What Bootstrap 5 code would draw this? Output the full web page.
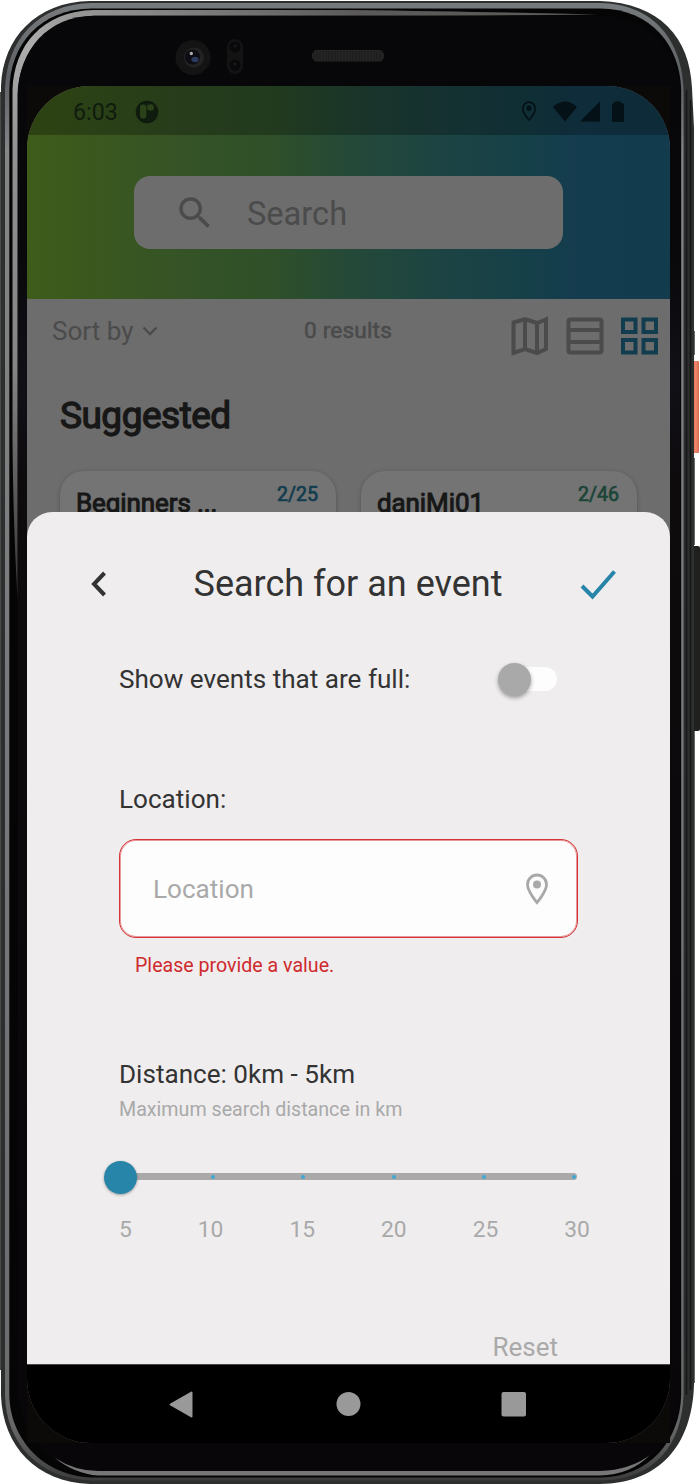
<!DOCTYPE html>
<html lang="en">
<head>
<meta charset="utf-8">
<meta name="viewport" content="width=device-width, initial-scale=1">
<title>Search for an event</title>
<link rel="stylesheet" href="https://cdn.jsdelivr.net/npm/bootstrap@5.3.0/dist/css/bootstrap.min.css">
<style>
  body { font-family: Roboto, "Liberation Sans", sans-serif; background: #fff; overflow: hidden; line-height: 1; }
  .phone { width: 700px; height: 1484px; padding: 86px 30px 41px 27px; }
  .phone-frame { z-index: 0; }
  .screen { width: 643px; height: 1357px; border-radius: 63px 63px 64px 64px; background: #6d6d6d; z-index: 1; }
  .top-gradient { background: linear-gradient(90deg, #3e5c1a 0, #3c5a1c 6%, #355326 24%, #2f5029 38%, #254938 50%, #1c4344 66%, #164048 77%, #143c4f 86%, #133b4e 100%); }
  .status { height: 49px; background: rgba(0,0,0,.265); color: #0f1c0d; padding: 3px 46px 0 46px; font-size: 23.2px; }
  .clock { padding-top: 2px; }
  .app-icon { margin-left: 17px; }
  .hero { height: 164px; padding-top: 41px; }
  .searchbox { width: 429px; height: 73px; border-radius: 16px; background: #6d6d6d; color: #4b4b4b; font-size: 32.6px; padding: 1px 0 0 40px; gap: 31px; }
  .search-text { padding-top: 2px; }
  .tools { height: 74px; color: #4b4b4b; padding: 16px 9px 0 25px; }
  .sort { font-size: 26px; line-height: 32px; width: 252px; gap: 9px; }
  .results { font-size: 22.6px; line-height: 32px; letter-spacing: .18px; -webkit-text-stroke: .6px currentColor; }
  .view-modes { gap: 14px; }
  .suggested { font-size: 37px; line-height: 44px; font-weight: 400; letter-spacing: -.5px; -webkit-text-stroke: 1.3px currentColor; color: #171717; padding-left: 33px; margin-top: 21px; margin-bottom: 33px; }
  .events { gap: 25px; padding-left: 33px; }
  .event { width: 276px; height: 190px; border-radius: 24px; background: #747474; box-shadow: 0 1px 4px rgba(0,0,0,.25); padding: 10px 18px 0 16px; }
  .event-name { font-size: 26px; line-height: 32px; letter-spacing: -.1px; -webkit-text-stroke: 1px currentColor; color: #171717; padding-top: 6px; }
  .event-count { font-size: 19.6px; line-height: 27px; -webkit-text-stroke: .7px currentColor; }
  .sheet { height: 852px; bottom: 79px; border-radius: 25px 25px 0 0; background: #efedee; color: #333; }
  .sheet-title { font-size: 36px; line-height: 44px; height: 44px; margin-top: 50px; padding: 0 53px 0 63px; }
  .title-text { margin-left: 8px; padding-bottom: 1px; }
  .fields { padding: 0 92px; font-size: 26.1px; line-height: 32px; }
  .full-row { margin-top: 57px; height: 32px; }
  .toggle-track { width: 51px; height: 24px; border-radius: 12px; background: #fdfdfd; margin-right: 21px; }
  .toggle-knob { width: 33px; height: 33px; left: -8px; top: -4px; background: #a9a9a9; box-shadow: 0 2px 4px rgba(0,0,0,.35); }
  .loc-label { margin-top: 88px; }
  .loc-input { height: 99px; margin-top: 24px; border: 1px solid #d43438; box-shadow: inset 0 0 0 1px rgba(212,52,56,.5); border-radius: 17px; background: #fdfdfd; color: #a9a9a9; padding: 0 28px 0 33px; }
  .error-text { color: #cf2a2d; font-size: 19.6px; line-height: 24px; margin: 16px 0 0 16px; }
  .distance { margin-top: 80px; }
  .hint { color: #a9a9a9; font-size: 19.65px; line-height: 24px; margin-top: 8px; }
  .slider-track { height: 7px; width: 458px; border-radius: 4px; background: #a9a9a9; margin-top: 51px; padding: 0 1px 0 92px; }
  .tick-dot { width: 4px; height: 4px; border-radius: 50%; background: #3fa9d6; }
  .thumb { width: 33px; height: 33px; left: -15.5px; top: -12.5px; background: #2785aa; box-shadow: 0 1px 3px rgba(0,0,0,.35); }
  .scale-labels { color: #a9a9a9; font-size: 22.8px; line-height: 28px; margin: 36px -12px 0 0; }
  .reset { color: #a9a9a9; padding-right: 112px; font-size: 26px; line-height: 32px; margin-top: 87px; }
  .navkeys { height: 79px; bottom: 0; background: #000; border-top: 1px solid #484848; }
</style>
</head>
<body>
<main class="phone position-relative">
  <svg class="phone-frame position-absolute top-0 start-0" width="700" height="1484" viewBox="0 0 700 1484" aria-hidden="true">
    <defs>
      <linearGradient id="orange" x1="0" x2="1"><stop offset="0" stop-color="#df6349"/><stop offset=".45" stop-color="#f08a70"/><stop offset="1" stop-color="#d9694f"/></linearGradient>
      <linearGradient id="rim" x1="0" x2="0" y1="0" y2="1"><stop offset="0" stop-color="#777b7e"/><stop offset=".05" stop-color="#5e6164"/><stop offset=".1" stop-color="#838587"/><stop offset=".9" stop-color="#6b6e70"/><stop offset=".965" stop-color="#666"/><stop offset="1" stop-color="#3c3c3c"/></linearGradient>
      <linearGradient id="shine" gradientUnits="userSpaceOnUse" x1="12" y1="600" x2="350" y2="10"><stop offset="0" stop-color="#333"/><stop offset=".3" stop-color="#858585"/><stop offset=".55" stop-color="#8f8f8f"/><stop offset=".72" stop-color="#adadad"/><stop offset="1" stop-color="#5b5a59"/></linearGradient>
      <linearGradient id="panel" x1="0" x2="0" y1="0" y2="1"><stop offset="0" stop-color="#070709"/><stop offset=".15" stop-color="#08080a"/><stop offset=".25" stop-color="#101016"/><stop offset=".32" stop-color="#0e0b0d"/><stop offset="1" stop-color="#080609"/></linearGradient>
      <pattern id="mesh" width="3" height="3" patternUnits="userSpaceOnUse"><rect width="3" height="3" fill="#171717"/><path d="M.5 0V3M2 0V3" stroke="#303030" stroke-width=".6"/></pattern>
    </defs>
    <path d="M0 92H3V1370H0Z" fill="#494b4a"/>
    <rect x="693" y="361" width="6" height="92" rx="1" fill="url(#orange)"/>
    <rect x="692" y="546" width="8" height="185" rx="2" fill="#20211f"/>
    <path d="M694.4 331V355M694.4 458V545M694.4 731V1383" stroke="#555756"/>
    <path d="M1 86C3 38 36 2 90 1H600C660 3 690 38 692 88L694 128V1385C692 1445 660 1483 600 1484H90C36 1482 3 1446 1 1396Z" fill="#2d2f2f"/>
    <path d="M686.5 90V1395M690.5 100V1390" stroke="#151617" stroke-width="1.5"/>
    <path d="M5 90C6 40 38 4 92 3H600C655 4 682 42 683.5 90V1395C682 1444 655 1480 600 1480.500H92C38 1479 6 1443 5 1395Z" fill="url(#rim)"/>
    <path d="M9.300 90C10 44 40 9 92 8.500H600C652 9 680 46 681.200 90V1395C680 1440 650 1477 600 1477.500H92C42 1476 10 1438 9.300 1395Z" fill="#050506"/>
    <path d="M12.500 90C14 46 42 11 94 10H350Q500 12 598 14.500Q450 15.800 350 15.800H94C46 18 19 52 17.500 95V600Q13 520 12.500 440Z" fill="url(#shine)"/>
    <path d="M18 93C19 50 48 16 94 15.800H598C650 16 679 50 680 93V1395C678 1438 650 1470 600 1471H92C48 1469 20 1432 18 1390Z" fill="url(#panel)"/>
    <path d="M55 1458Q75 1471 98 1471H600Q630 1470 650 1455Q630 1475 600 1475.500H98Q75 1474 55 1458Z" fill="#777"/>
    <path d="M27 86H100V200H27ZM600 86H670V180H600ZM27 1370H100V1443H27ZM600 1370H670V1443H600Z" fill="#0c0a08"/>
    <circle cx="193" cy="57.500" r="17.500" fill="#141414"/><circle cx="194" cy="57.500" r="10" fill="#232324"/><circle cx="192.500" cy="57" r="7.500" fill="#0d0d13"/><ellipse cx="195" cy="59.500" rx="3.600" ry="2.800" fill="#2c3a60"/><circle cx="191.300" cy="53.500" r="1.700" fill="#aaa"/>
    <rect x="227" y="39" width="16" height="35" rx="8" fill="#131314"/><circle cx="235" cy="47" r="5.500" fill="#09090b"/><circle cx="235" cy="65" r="5.500" fill="#09090b"/><circle cx="235" cy="46" r="1.500" fill="#1b1b1d"/><circle cx="235" cy="64" r="1.500" fill="#1b1b1d"/>
    <rect x="312.500" y="50.500" width="71" height="10.500" rx="4.500" fill="url(#mesh)" stroke="#272727"/>
  </svg>

  <div class="screen position-relative overflow-hidden">
    <header class="top-gradient">
      <div class="status d-flex align-items-center">
        <span class="clock">6:03</span>
        <svg class="app-icon" width="24" height="24" viewBox="0 0 24 24"><circle cx="12" cy="12" r="11.300" fill="#0f1c0d"/><rect x="5" y="4.500" width="6.300" height="14" rx="3" fill="#2a4119"/><circle cx="15.700" cy="7.500" r="3.200" fill="#2a4119"/><rect x="11.600" y="4.500" width="1.500" height="6" fill="#2a4119" opacity=".5"/></svg>
        <svg class="ms-auto" width="106" height="24" viewBox="0 0 106 24" fill="#041217"><path d="M11 2.200a6.200 6.200 0 0 0-6.200 6.200C4.800 13 11 20 11 20s6.200-7 6.200-11.600a6.200 6.200 0 0 0-6.200-6.200Z" fill="none" stroke="#041217" stroke-width="1.800"/><circle cx="11" cy="8.200" r="2.600"/><path d="M35 7Q47-4 59 7L47 21.500ZM82 1.500V21.500H62ZM96.500 1.500H103V3.300H104.500Q106 3.300 106 5V20.500Q106 22 104.500 22H95.500Q94 22 94 20.500V5Q94 3.300 95.500 3.300H96.500Z"/></svg>
      </div>
      <div class="hero d-flex justify-content-center">
        <div class="searchbox d-flex align-items-center">
          <svg width="42" height="42" viewBox="0 0 24 24" fill="currentColor"><path d="M15.500 14h-.79l-.28-.27A6.470 6.470 0 0 0 16 9.500 6.500 6.500 0 1 0 9.500 16c1.610 0 3.090-.59 4.230-1.570l.27.28v.79l5 4.990L20.490 19zm-6 0C7.010 14 5 11.990 5 9.500S7.010 5 9.500 5 14 7.010 14 9.500 11.990 14 9.500 14z"/></svg>
          <span class="search-text">Search</span>
        </div>
      </div>
    </header>

    <div class="tools d-flex align-items-start">
      <div class="sort d-flex align-items-center"><span>Sort by</span>
        <svg width="16" height="12" viewBox="0 0 16 12"><path d="M1.500 2.500 8 9l6.500-6.500" fill="none" stroke="currentColor" stroke-width="2.300"/></svg>
      </div>
      <div class="results">0 results</div>
      <div class="view-modes d-flex ms-auto">
        <svg width="41" height="41" viewBox="0 0 41 41" fill="none" stroke="#4b4b4b" stroke-width="4"><path d="M3.500 7.500 15 4l12 4 9-3.500V34l-9 4-12-4-11.500 4ZM15 4V34M27 8V38"/></svg>
        <svg width="41" height="41" viewBox="0 0 41 41" fill="none" stroke="#4b4b4b" stroke-width="4"><rect x="3.500" y="4.500" width="33" height="33" rx="2"/><path d="M3.500 15H36.500M3.500 27H36.500"/></svg>
        <svg width="41" height="41" viewBox="0 0 41 41" fill="none" stroke="#123d4e" stroke-width="4"><path d="M3 4.500H15.500V17H3ZM23.500 4.500H36V17H23.500ZM3 25H15.500V37.500H3ZM23.500 25H36V37.500H23.500Z"/></svg>
      </div>
    </div>
    <h2 class="suggested">Suggested</h2>
    <div class="events d-flex">
      <article class="event d-flex justify-content-between"><div class="event-name">Beginners ...</div><div class="event-count" style="color:#123d4e">2/25</div></article>
      <article class="event d-flex justify-content-between"><div class="event-name">daniMi01</div><div class="event-count" style="color:#1b4538">2/46</div></article>
    </div>

    <section class="sheet position-absolute start-0 w-100 overflow-hidden">
      <div class="sheet-title d-flex align-items-center justify-content-between">
        <svg width="18" height="28" viewBox="0 0 18 28"><path d="M14.500 3 4 14l10.500 11" fill="none" stroke="#333" stroke-width="4"/></svg>
        <span class="title-text">Search for an event</span>
        <svg width="37" height="34" viewBox="0 0 37 34"><path d="M2 19 12.500 29.500 34.500 4.500" fill="none" stroke="#2785aa" stroke-width="4"/></svg>
      </div>
      <div class="fields">
        <div class="full-row d-flex align-items-center justify-content-between">
          <span>Show events that are full:</span>
          <div class="toggle-track position-relative"><div class="toggle-knob position-absolute rounded-circle"></div></div>
        </div>
        <div class="loc-label">Location:</div>
        <div class="loc-input d-flex align-items-center justify-content-between">
          <span>Location</span>
          <svg width="24" height="34" viewBox="0 0 24 34"><path d="M12 3a9.500 9.500 0 0 0-9.500 9.500C2.500 19.500 12 30.500 12 30.500s9.500-11 9.500-18A9.500 9.500 0 0 0 12 3Z" fill="none" stroke="#a9a9a9" stroke-width="2.800"/><circle cx="12" cy="12.500" r="4" fill="#a9a9a9"/></svg>
        </div>
        <div class="error-text">Please provide a value.</div>
        <div class="distance">Distance: 0km - 5km</div>
        <div class="hint">Maximum search distance in km</div>
        <div class="slider-track position-relative d-flex align-items-center justify-content-between">
          <i class="tick-dot"></i><i class="tick-dot"></i><i class="tick-dot"></i><i class="tick-dot"></i><i class="tick-dot"></i>
          <div class="thumb position-absolute rounded-circle"></div>
        </div>
        <div class="scale-labels d-flex justify-content-between"><span>5</span><span>10</span><span>15</span><span>20</span><span>25</span><span>30</span></div>
      </div>
      <div class="reset text-end">Reset</div>
    </section>

    <nav class="navkeys position-absolute start-0 w-100 d-flex justify-content-center">
      <svg width="643" height="78" viewBox="0 1 643 78" fill="#999"><path d="M143.500 40.500 164.500 28.500V52.500Z" stroke="#999" stroke-width="2" stroke-linejoin="round"/><circle cx="321.500" cy="40" r="12"/><rect x="474.500" y="28" width="24.500" height="24.500" rx="2"/></svg>
    </nav>
  </div>
</main>
<script src="https://cdn.jsdelivr.net/npm/bootstrap@5.3.0/dist/js/bootstrap.bundle.min.js"></script>
</body>
</html>
